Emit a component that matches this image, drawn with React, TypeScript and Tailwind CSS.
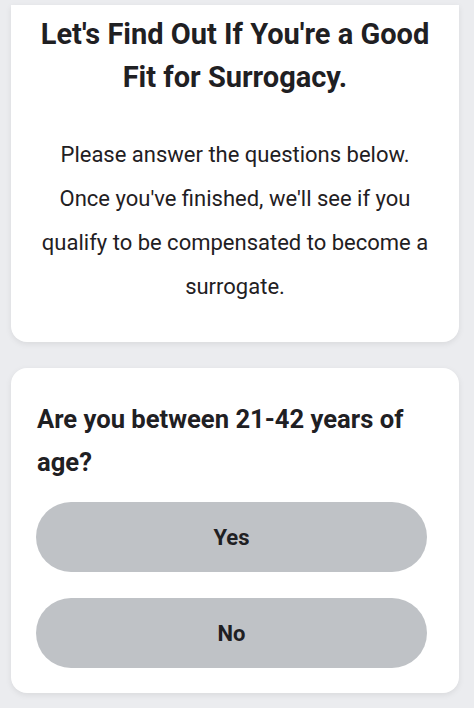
const App = () => {
  return (
    <div
      className="min-h-[708px] bg-[#ebecef] pl-[11px] pr-[15px] pt-[5px] pb-[14px] text-[#1f2023]"
      style={{ fontFamily: "Roboto, 'Liberation Sans', sans-serif" }}
    >
      {/* Intro card */}
      <div className="bg-white rounded-b-[16px] shadow-[0_2px_6px_rgba(0,0,0,0.08)] px-[24px] pt-[8px] pb-[33px] text-center">
        <h1 className="text-[29px] font-bold leading-[43px]">
          Let's Find Out If You're a Good Fit for Surrogacy.
        </h1>
        <p className="mt-[34px] text-[22px] leading-[44px]">
          Please answer the questions below. Once you've finished, we'll see if
          you qualify to be compensated to become a surrogate.
        </p>
      </div>

      {/* Question card */}
      <div className="mt-[26px] bg-white rounded-[16px] shadow-[0_2px_6px_rgba(0,0,0,0.08)] pl-[25px] pr-[32px] pt-[30px] pb-[25px]">
        <h2 className="text-[25.6px] font-bold leading-[43px] pl-[1px]">
          Are you between 21-42 years of age?
        </h2>
        <div className="mt-[18px] flex flex-col gap-[26px]">
          <button className="h-[70px] w-full rounded-full bg-[#bfc2c6] text-[22px] font-bold text-[#1f2023]">
            Yes
          </button>
          <button className="h-[70px] w-full rounded-full bg-[#bfc2c6] text-[22px] font-bold text-[#1f2023]">
            No
          </button>
        </div>
      </div>
    </div>
  );
};

export default App;
